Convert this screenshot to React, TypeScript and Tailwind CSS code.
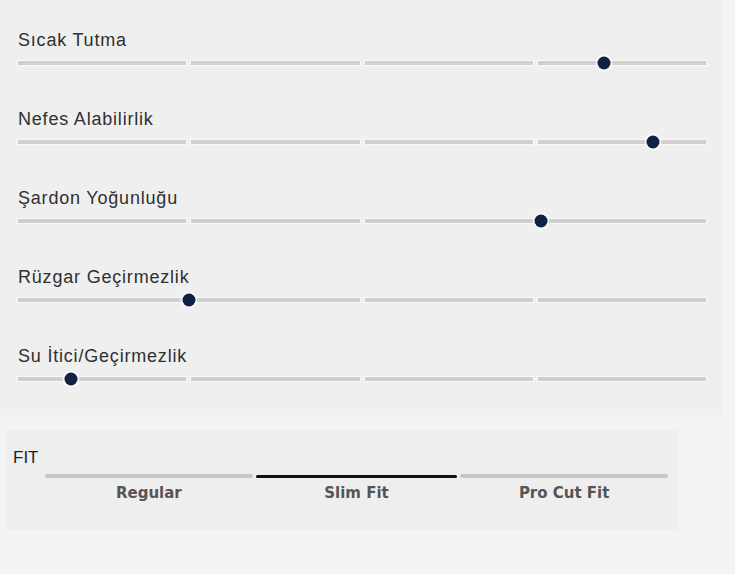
import React from "react";

type Rating = {
  label: string;
  value: number;
};

const ratings: Rating[] = [
  { label: "Sıcak Tutma", value: 85.2 },
  { label: "Nefes Alabilirlik", value: 92.3 },
  { label: "Şardon Yoğunluğu", value: 76 },
  { label: "Rüzgar Geçirmezlik", value: 24.9 },
  { label: "Su İtici/Geçirmezlik", value: 7.7 },
];

const fits = ["Regular", "Slim Fit", "Pro Cut Fit"];

function RatingRow({ label, value }: Rating) {
  return (
    <div className="flex flex-col">
      <div className="text-[18px] leading-[20px] tracking-[0.8px] text-[#303030] font-['Liberation_Sans',Arial,sans-serif]">
        {label}
      </div>
      <div className="relative mt-[6px] h-[14px] flex items-center gap-[5px]">
        {[0, 1, 2, 3].map((i) => (
          <div
            key={i}
            className="flex-1 h-[4px] bg-[#cfcfcf] shadow-[0_0_0_1px_rgba(255,255,255,0.55)]"
          />
        ))}
        <div
          className="absolute top-1/2 w-[13px] h-[13px] -translate-x-1/2 -translate-y-1/2 rounded-full bg-[#0f2244] ring-2 ring-white/70"
          style={{ left: `${value}%` }}
        />
      </div>
    </div>
  );
}

export default function App() {
  return (
    <div className="w-[735px] h-[574px] bg-[#f3f3f3] overflow-hidden">
      <div className="w-[722px] h-[415px] bg-[#efefef] pt-[30px] pl-[18px] pr-[16px] flex flex-col gap-[39px]">
        {ratings.map((r) => (
          <RatingRow key={r.label} label={r.label} value={r.value} />
        ))}
      </div>

      <div className="ml-[6px] mt-[15px] w-[671px] h-[100px] bg-[#eeeeee] pt-[18px] pl-[7px] pr-[9px]">
        <div className="text-[17px] leading-[20px] text-[#1e1e1e] font-['Liberation_Sans',Arial,sans-serif]">
          FIT
        </div>
        <div className="ml-[32px] mt-[4px] grid grid-cols-3">
          {fits.map((f, i) => (
            <div key={f} className="flex flex-col items-center">
              <div className="w-full h-[8px] flex items-center">
                {i === 1 ? (
                  <div className="mx-[3px] w-full h-[3px] bg-[#111111] rounded-full" />
                ) : (
                  <div className="w-full h-[4px] bg-[#c6c6c6] rounded-full" />
                )}
              </div>
              <div className="mt-[3px] text-[15px] leading-[20px] font-bold text-[#555555] font-['DejaVu_Sans',sans-serif]">
                {f}
              </div>
            </div>
          ))}
        </div>
      </div>
    </div>
  );
}
